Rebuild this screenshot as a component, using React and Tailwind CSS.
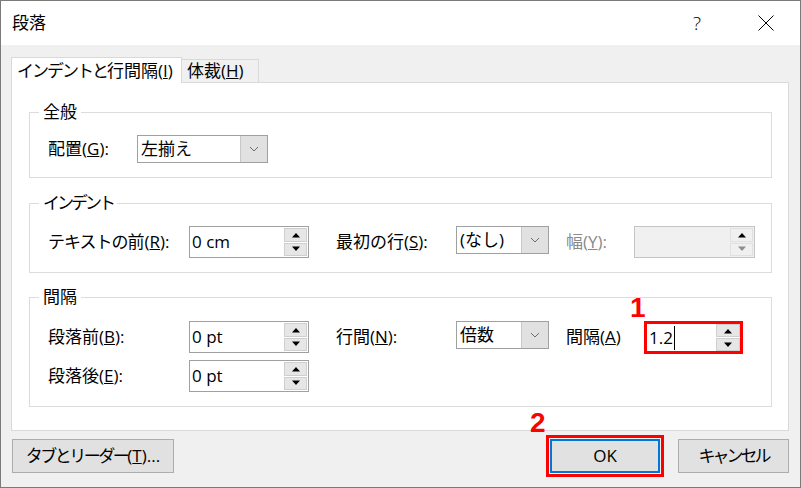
import React from "react";

const Up = ({ color = "#000" }) => (
  <svg width="10" height="6" viewBox="0 0 10 6">
    <path d="M1 5.5 L5 1 L9 5.5 Z" fill={color} />
  </svg>
);

const Down = ({ color = "#000" }) => (
  <svg width="10" height="6" viewBox="0 0 10 6">
    <path d="M1 0.5 L5 5 L9 0.5 Z" fill={color} />
  </svg>
);

const Chevron = () => (
  <svg width="10" height="6" viewBox="0 0 10 6">
    <path d="M1 1 L5 5 L9 1" fill="none" stroke="#6d6d6d" strokeWidth="1" />
  </svg>
);

const Spin = ({ value, w, disabled, red, cursor }) => {
  const box = red
    ? "border-[3px] border-[#ff0000] bg-white h-[33px]"
    : disabled
    ? "border border-[#c4c4c4] bg-[#f0f0f0] h-[32px]"
    : "border border-[#a0a0a0] bg-white h-[32px]";
  return (
    <div className={`flex ${box}`} style={{ width: w }}>
      <div className="flex-1 flex items-center pl-[2px] text-[17px]">
        {value}
        {cursor && <span className="ml-[1px] w-px h-[24px] bg-black" />}
      </div>
      <div className={`flex flex-col w-[24px] gap-[1px] ${red ? "py-0" : "py-[1px] pr-[1px]"}`}>
        <div className={`flex-1 flex items-center justify-center border ${disabled ? "border-[#e0e0e0] bg-[#f0f0f0]" : "border-[#cfcfcf] bg-[#e6e6e6]"}`}>
          <Up />
        </div>
        <div className={`flex-1 flex items-center justify-center border ${disabled ? "border-[#e0e0e0] bg-[#f0f0f0]" : "border-[#cfcfcf] bg-[#e6e6e6]"}`}>
          <Down color={disabled ? "#8c8c8c" : "#000"} />
        </div>
      </div>
    </div>
  );
};

const Dropdown = ({ value, w }) => (
  <div className="flex h-[28px] border border-[#a0a0a0] bg-white" style={{ width: w }}>
    <div className="flex-1 flex items-center pl-[3px] text-[17px]">{value}</div>
    <div className="w-[27px] flex items-center justify-center bg-[#e1e1e1] border-l border-[#c8c8c8]">
      <Chevron />
    </div>
  </div>
);

const Label = ({ children, className = "" }) => (
  <div className={`h-[32px] flex items-center text-[17px] whitespace-nowrap ${className}`}>{children}</div>
);

const Group = ({ title, className, children }) => (
  <div className={`border border-[#dcdcdc] ml-[17px] mr-[16px] ${className}`}>
    <div className="-mt-[11px] ml-[9px] px-[4px] w-fit bg-white leading-[20px] text-[17px]">{title}</div>
    {children}
  </div>
);

export default function App() {
  return (
    <div className="relative w-[801px] h-[488px] border border-[#7a7a7a] bg-[#f0f0f0] flex flex-col text-black font-['Open_Sans','Noto_Sans_CJK_JP',sans-serif]">
      {/* title bar */}
      <div className="h-[44px] bg-white flex items-center pl-[11px] shrink-0">
        <span className="text-[17px]">段落</span>
        <span className="ml-auto text-[19px] font-light mr-[57px]">?</span>
        <svg width="16" height="16" viewBox="0 0 16 16" className="mr-[26px]">
          <path d="M0.5 0.5 L15.5 15.5 M15.5 0.5 L0.5 15.5" stroke="#000" strokeWidth="1" />
        </svg>
      </div>

      <div className="flex-1 pl-[10px] pr-[11px]">
        {/* tabs */}
        <div className="flex items-end mt-[12px]">
          <div className="relative z-10 -mb-px h-[26px] w-[171px] border border-b-0 border-[#d9d9d9] bg-white pl-[5px] flex items-center text-[17px] whitespace-nowrap">
            <span className="tracking-[-2px]">インデントと</span>行間隔(<u>I</u>)
          </div>
          <div className="h-[23px] w-[77px] border border-l-0 border-b-0 border-[#d9d9d9] pl-[5px] flex items-center text-[17px] whitespace-nowrap">
            体裁(<u>H</u>)
          </div>
        </div>

        {/* panel */}
        <div className="h-[349px] border border-[#d9d9d9] bg-white">
          <Group title="全般" className="mt-[29px] h-[66px]">
            <div className="mt-[13px] pl-[18px] flex items-center">
              <div className="w-[89px] text-[17px] whitespace-nowrap">配置(<u>G</u>):</div>
              <Dropdown value="左揃え" w={131} />
            </div>
          </Group>

          <Group title={<span className="tracking-[-3px]">インデント</span>} className="mt-[25px] h-[70px]">
            <div className="mt-[13px] pl-[18px] flex items-start">
              <Label className="w-[141px]">
                <span className="tracking-[-1px]">テキストの</span>前(<u>R</u>):
              </Label>
              <Spin value="0 cm" w={120} />
              <Label className="ml-[27px] w-[120px]">最初の行(<u>S</u>):</Label>
              <Dropdown value="(なし)" w={93} />
              <Label className="ml-[17px] w-[68px] text-[#8a8a8a]">幅(<u>Y</u>):</Label>
              <Spin value="" w={121} disabled />
            </div>
          </Group>

          <Group title="間隔" className="mt-[24px] h-[110px]">
            <div className="mt-[14px] pl-[18px] flex items-start">
              <Label className="w-[141px]">段落前(<u>B</u>):</Label>
              <Spin value="0 pt" w={120} />
              <Label className="ml-[27px] w-[120px]">行間(<u>N</u>):</Label>
              <Dropdown value="倍数" w={93} />
              <Label className="ml-[17px] w-[78px]">間隔(<u>A</u>)</Label>
              <Spin value="1.2" w={99} red cursor />
            </div>
            <div className="mt-[6px] pl-[18px] flex items-start">
              <Label className="w-[141px]">段落後(<u>E</u>):</Label>
              <Spin value="0 pt" w={120} />
            </div>
          </Group>
        </div>

        {/* bottom buttons */}
        <div className="mt-[8px] flex items-start">
          <button className="ml-[1px] w-[162px] h-[34px] bg-[#e1e1e1] border border-[#adadad] text-[17px] whitespace-nowrap">
            <span className="tracking-[-2.5px]">タブとリーダー</span>(<u>T</u>)...
          </button>
          <div className="ml-auto -mt-[4px] border-[3px] border-[#ff0000] p-[1px]">
            <button className="w-[110px] h-[34px] bg-[#e1e1e1] border-2 border-[#0078d7] text-[17px]">OK</button>
          </div>
          <button className="ml-[14px] w-[111px] h-[34px] bg-[#e1e1e1] border border-[#adadad] text-[17px] whitespace-nowrap tracking-[-3px]">
            キャンセル
          </button>
        </div>
      </div>

      {/* annotations */}
      <span className="absolute left-[629px] top-[293px] text-[28px] leading-none font-bold text-[#ff0000] font-['Liberation_Sans',sans-serif]">1</span>
      <span className="absolute left-[529px] top-[408px] text-[28px] leading-none font-bold text-[#ff0000] font-['Liberation_Sans',sans-serif]">2</span>
    </div>
  );
}
